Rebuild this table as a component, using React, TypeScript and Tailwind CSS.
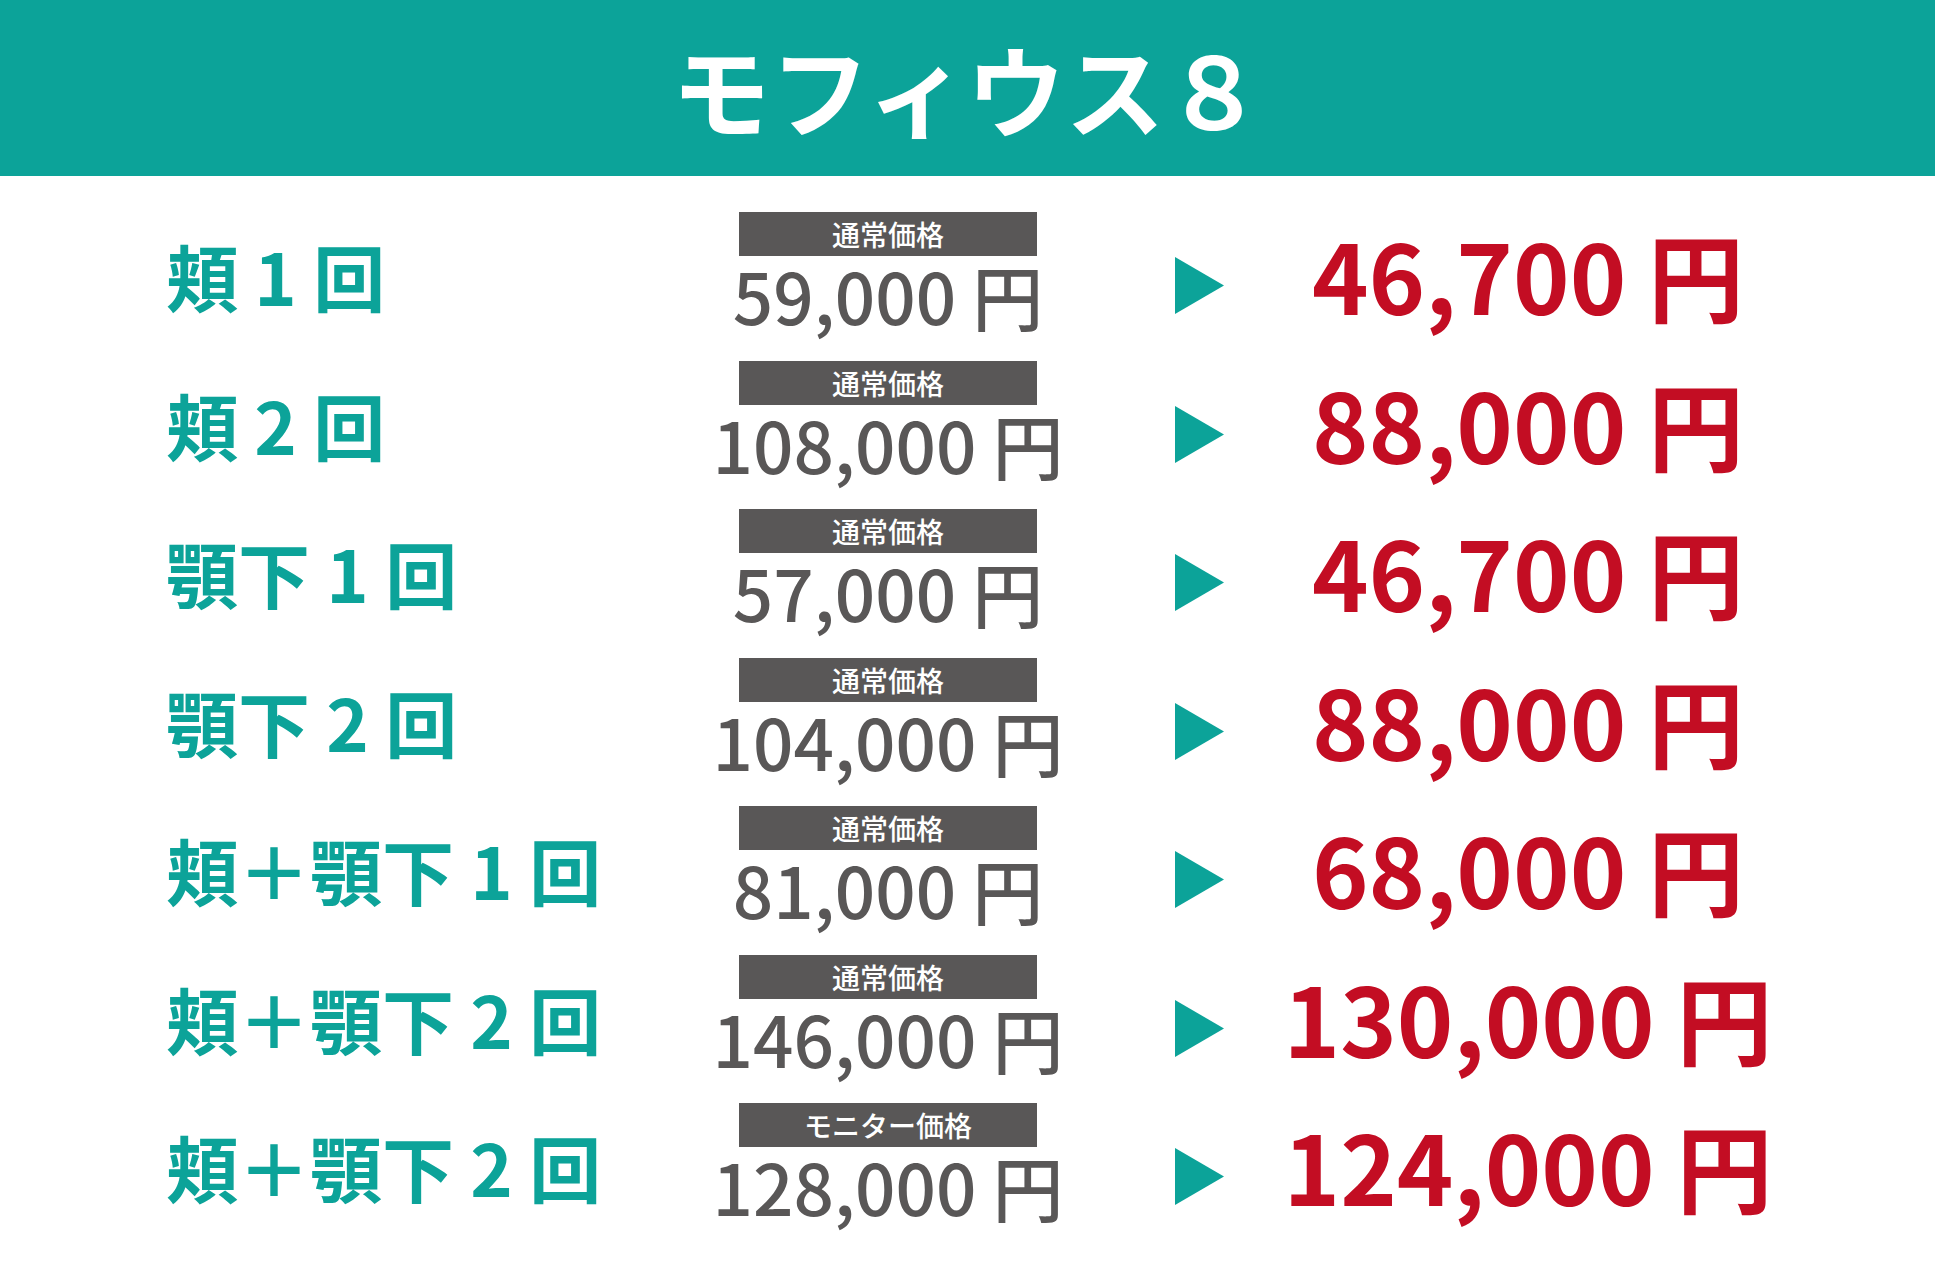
const rows = [
  { label: "頬 1 回", tag: "通常価格", regular: "59,000", price: "46,700" },
  { label: "頬 2 回", tag: "通常価格", regular: "108,000", price: "88,000" },
  { label: "顎下 1 回", tag: "通常価格", regular: "57,000", price: "46,700" },
  { label: "顎下 2 回", tag: "通常価格", regular: "104,000", price: "88,000" },
  { label: "頬＋顎下 1 回", tag: "通常価格", regular: "81,000", price: "68,000" },
  { label: "頬＋顎下 2 回", tag: "通常価格", regular: "146,000", price: "130,000" },
  { label: "頬＋顎下 2 回", tag: "モニター価格", regular: "128,000", price: "124,000" },
];

const font = { fontFamily: '"Noto Sans CJK JP", "Noto Sans", sans-serif' };

export default function App() {
  return (
    <div className="w-[1935px] h-[1270px] bg-white overflow-hidden" style={font}>
      <header className="h-[176px] bg-[#0ca399] flex items-center justify-center">
        <h1 className="text-[99px] leading-none font-bold text-white pb-[2px]">モフィウス８</h1>
      </header>

      <div className="pt-[36px]">
        {rows.map((r, i) => (
          <div key={i} className="flex items-start h-[148.5px]">
            <div className="w-[667px] pl-[166px] pt-[27px]">
              <p className="text-[72px] leading-none font-bold text-[#0ca399] whitespace-nowrap">
                {r.label}
              </p>
            </div>

            <div className="w-[442px] flex flex-col items-center">
              <div className="w-[298px] h-[44px] bg-[#595757] flex items-center justify-center">
                <span className="text-[28px] leading-none font-medium text-white">{r.tag}</span>
              </div>
              <p className="mt-[3px] text-[71px] leading-none font-medium text-[#595757] whitespace-nowrap">
                {r.regular} 円
              </p>
            </div>

            <div className="pl-[66px] pt-[45px]">
              <svg width="49" height="57" viewBox="0 0 49 57" className="block">
                <polygon points="0,0 49,28.5 0,57" fill="#0ca399" />
              </svg>
            </div>

            <div className="w-[608px] pt-[14px] flex justify-center">
              <p className="text-[96px] leading-none font-bold text-[#c30d23] whitespace-nowrap">
                {r.price} 円
              </p>
            </div>
          </div>
        ))}
      </div>
    </div>
  );
}
